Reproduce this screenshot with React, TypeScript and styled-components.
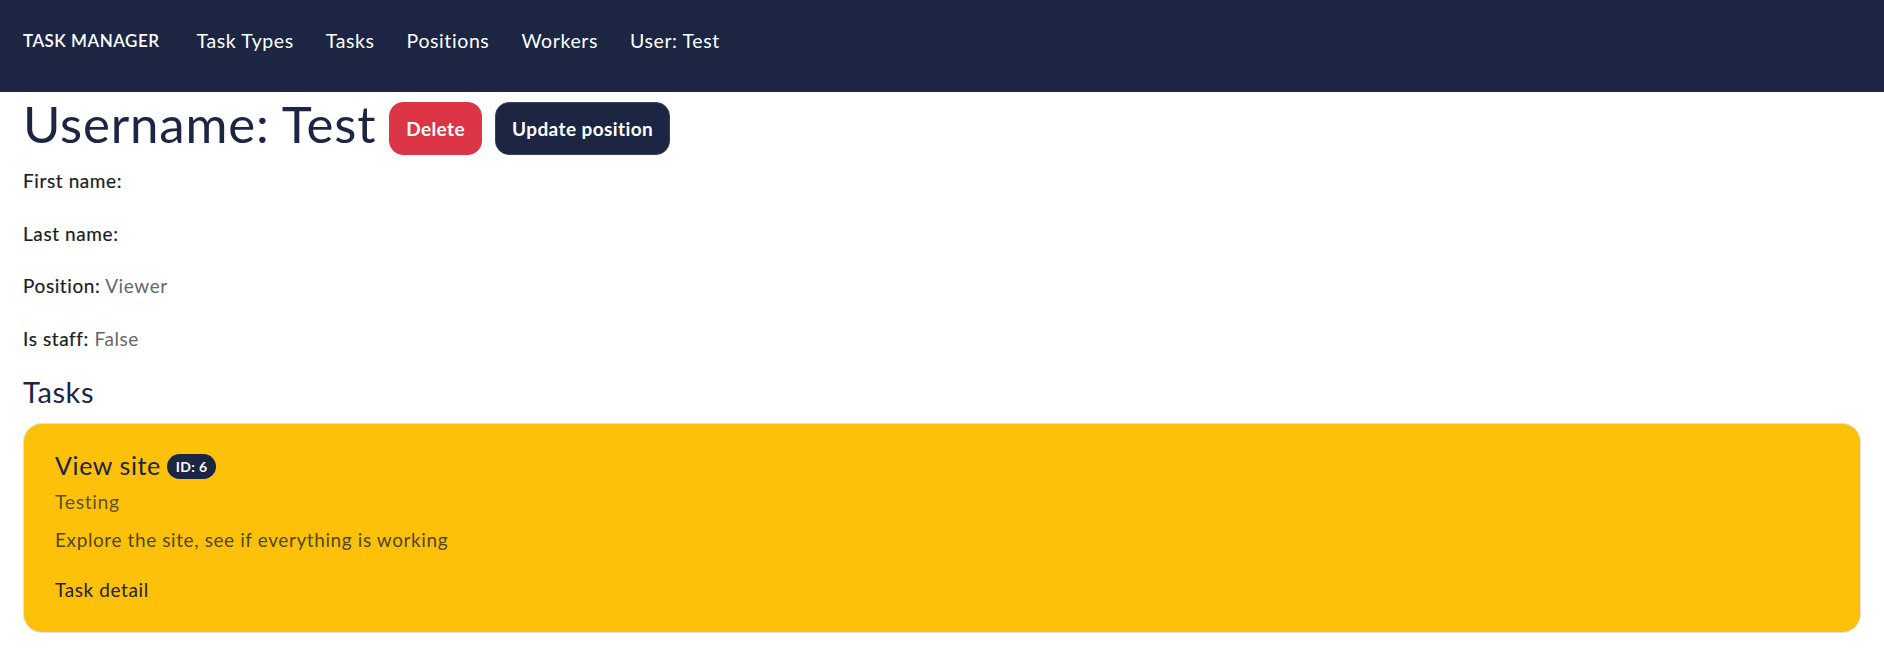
import * as React from 'react';
import styled, { createGlobalStyle } from 'styled-components';

const navy = '#1c2541';

const GlobalStyle = createGlobalStyle`
  html, body {
    margin: 0;
    padding: 0;
    background: #ffffff;
  }
  body {
    font-family: Lato, "Noto Sans", "Liberation Sans", sans-serif;
    color: #212529;
    letter-spacing: 0.6px;
  }
  * {
    box-sizing: border-box;
  }
`;

const Navbar = styled.nav`
  height: 92px;
  background: ${navy};
  display: flex;
  align-items: center;
  padding: 0 23px;
  padding-bottom: 12px;
`;

const Brand = styled.a`
  color: #ffffff;
  font-size: 17px;
  font-weight: 600;
  letter-spacing: 0.5px;
  margin-right: 37px;
  text-decoration: none;
`;

const NavLinks = styled.div`
  display: flex;
  align-items: center;
  gap: 32px;
`;

const NavLink = styled.a`
  color: #ffffff;
  font-size: 19.5px;
  text-decoration: none;
`;

const Main = styled.main`
  padding: 0 23px;
`;

const TitleRow = styled.div`
  display: flex;
  align-items: center;
  gap: 13px;
  padding-top: 1px;
  margin-bottom: 11px;
`;

const Heading = styled.h1`
  margin: 0;
  font-size: 51px;
  font-weight: 400;
  line-height: 1.2;
  letter-spacing: 0.8px;
  color: ${navy};
`;

const Button = styled.button<{ $variant: 'danger' | 'dark' }>`
  height: 53px;
  padding: 0 16px;
  border-radius: 14px;
  font-family: inherit;
  font-size: 19px;
  font-weight: 700;
  letter-spacing: 0.4px;
  color: #ffffff;
  cursor: pointer;
  background: ${({ $variant }) => ($variant === 'danger' ? '#dc3545' : navy)};
  border: 1.5px solid ${({ $variant }) => ($variant === 'danger' ? '#dc3545' : '#3a4260')};
  margin-top: 9px;
`;

const Field = styled.p`
  margin: 0 0 23.5px;
  font-size: 19px;
  line-height: 29px;
  color: #1a1d21;
`;

const Label = styled.span`
  font-weight: 400;
  -webkit-text-stroke: 0.2px #1a1d21;
`;

const Value = styled.span`
  color: #666666;
  font-weight: 400;
`;

const SectionTitle = styled.h3`
  margin: -1px 0 13px;
  font-size: 29px;
  font-weight: 400;
  line-height: 1.2;
  color: ${navy};
`;

const Card = styled.div`
  background: #fdc10a;
  border: 1px solid #e0e0e0;
  border-radius: 19px;
  padding: 26px 31px 28px;
`;

const CardTitle = styled.h5`
  margin: 0 0 10px;
  font-size: 25px;
  font-weight: 400;
  line-height: 1.2;
  color: ${navy};
  display: flex;
  align-items: center;
  gap: 6px;
`;

const Badge = styled.span`
  display: inline-block;
  background: ${navy};
  color: #ffffff;
  font-size: 14px;
  font-weight: 700;
  letter-spacing: 0.3px;
  line-height: 25px;
  padding: 0 9px;
  border-radius: 13px;
  margin-top: 4px;
`;

const CardSubtitle = styled.h6`
  margin: 0 0 12px;
  font-size: 19.5px;
  font-weight: 400;
  line-height: 1.2;
  color: rgba(33, 37, 41, 0.72);
`;

const CardText = styled.p`
  margin: 0 0 21px;
  font-size: 19px;
  line-height: 29px;
  color: rgba(33, 37, 41, 0.8);
  font-weight: 400;
`;

const CardLink = styled.a`
  font-size: 19px;
  line-height: 29px;
  color: #1f2230;
  font-weight: 400;
  text-decoration: none;
`;

const worker = {
  username: 'Test',
  firstName: '',
  lastName: '',
  position: 'Viewer',
  isStaff: 'False',
};

const tasks = [
  {
    id: 6,
    name: 'View site',
    type: 'Testing',
    description: 'Explore the site, see if everything is working',
  },
];

const App = () => {
  return (
    <>
      <GlobalStyle />
      <Navbar>
        <Brand href="#">TASK MANAGER</Brand>
        <NavLinks>
          <NavLink href="#">Task Types</NavLink>
          <NavLink href="#">Tasks</NavLink>
          <NavLink href="#">Positions</NavLink>
          <NavLink href="#">Workers</NavLink>
          <NavLink href="#">User: {worker.username}</NavLink>
        </NavLinks>
      </Navbar>
      <Main>
        <TitleRow>
          <Heading>Username: {worker.username}</Heading>
          <Button $variant="danger">Delete</Button>
          <Button $variant="dark">Update position</Button>
        </TitleRow>
        <Field><Label>First name:</Label> <Value>{worker.firstName}</Value></Field>
        <Field><Label>Last name:</Label> <Value>{worker.lastName}</Value></Field>
        <Field><Label>Position:</Label> <Value>{worker.position}</Value></Field>
        <Field><Label>Is staff:</Label> <Value>{worker.isStaff}</Value></Field>
        <SectionTitle>Tasks</SectionTitle>
        {tasks.map((task) => (
          <Card key={task.id}>
            <CardTitle>
              {task.name}
              <Badge>ID: {task.id}</Badge>
            </CardTitle>
            <CardSubtitle>{task.type}</CardSubtitle>
            <CardText>{task.description}</CardText>
            <CardLink href="#">Task detail</CardLink>
          </Card>
        ))}
      </Main>
    </>
  );
};

export default App;
